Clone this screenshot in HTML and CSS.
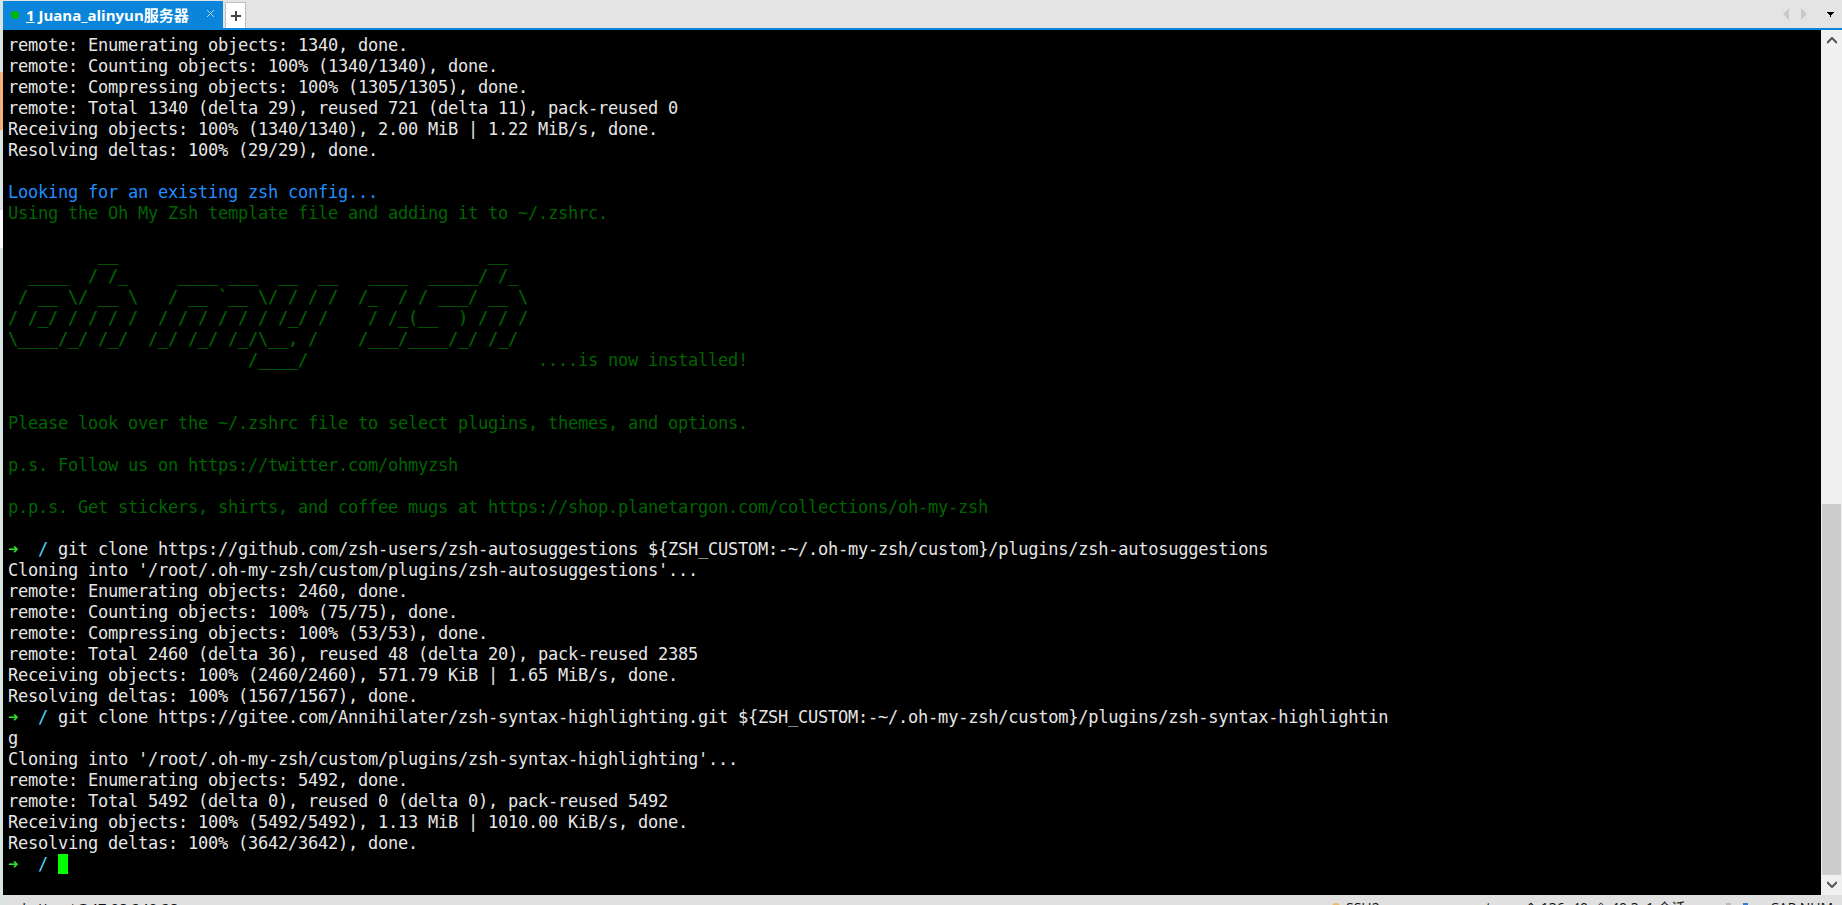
FILE: index.html
```html
<!DOCTYPE html>
<html lang="en">
<head>
<meta charset="utf-8">
<title>Juana_alinyun服务器</title>
<link rel="stylesheet" href="styles.css">
</head>
<body>
<div class="app">
  <div class="edge"></div>
  <div class="window">
    <header class="tabbar">
      <div class="tab">
        <span class="dot"></span>
        <span class="tab-title"><u>1</u> Juana_alinyun服务器</span>
        <svg class="tab-close" width="10" height="10" viewBox="0 0 10 10"><path d="M1 1l7 7M8 1l-7 7" stroke="#b5d9f3" stroke-width="1"/></svg>
      </div>
      <div class="tab-add"><svg width="12" height="12" viewBox="0 0 12 12"><path d="M6 1v10M1 6h10" stroke="#444" stroke-width="2"/></svg></div>
      <div class="tab-nav">
        <svg width="6" height="12" viewBox="0 0 6 12"><path d="M6 0v12L0 6z" fill="#c9c9c9"/></svg>
        <svg class="nav-next" width="6" height="12" viewBox="0 0 6 12"><path d="M0 0v12l6-6z" fill="#c9c9c9"/></svg>
        <svg class="nav-menu" width="7" height="5" viewBox="0 0 7 5"><path d="M0 0h7v1h-1v1h-1v1h-1v2h-1v-2h-1v-1h-1v-1h-1z" fill="#000"/></svg>
      </div>
    </header>
    <div class="main">
<pre class="term">remote: Enumerating objects: 1340, done.
remote: Counting objects: 100% (1340/1340), done.
remote: Compressing objects: 100% (1305/1305), done.
remote: Total 1340 (delta 29), reused 721 (delta 11), pack-reused 0
Receiving objects: 100% (1340/1340), 2.00 MiB | 1.22 MiB/s, done.
Resolving deltas: 100% (29/29), done.

<span class="blue">Looking for an existing zsh config...</span>
<span class="green">Using the Oh My Zsh template file and adding it to ~/.zshrc.</span>

<span class="green art">         __                                     __
  ____  / /_     ____ ___  __  __   ____  _____/ /_
 / __ \/ __ \   / __ `__ \/ / / /  /_  / / ___/ __ \
/ /_/ / / / /  / / / / / / /_/ /    / /_(__  ) / / /
\____/_/ /_/  /_/ /_/ /_/\__, /    /___/____/_/ /_/
                        /____/                       </span><span class="green">....is now installed!


Please look over the ~/.zshrc file to select plugins, themes, and options.

p.s. Follow us on https://twitter.com/ohmyzsh

p.p.s. Get stickers, shirts, and coffee mugs at https://shop.planetargon.com/collections/oh-my-zsh</span>

<span class="arrow">➜</span>  <span class="cyan">/</span> git clone https://github.com/zsh-users/zsh-autosuggestions ${ZSH_CUSTOM:-~/.oh-my-zsh/custom}/plugins/zsh-autosuggestions
Cloning into '/root/.oh-my-zsh/custom/plugins/zsh-autosuggestions'...
remote: Enumerating objects: 2460, done.
remote: Counting objects: 100% (75/75), done.
remote: Compressing objects: 100% (53/53), done.
remote: Total 2460 (delta 36), reused 48 (delta 20), pack-reused 2385
Receiving objects: 100% (2460/2460), 571.79 KiB | 1.65 MiB/s, done.
Resolving deltas: 100% (1567/1567), done.
<span class="arrow">➜</span>  <span class="cyan">/</span> git clone https://gitee.com/Annihilater/zsh-syntax-highlighting.git ${ZSH_CUSTOM:-~/.oh-my-zsh/custom}/plugins/zsh-syntax-highlightin
g
Cloning into '/root/.oh-my-zsh/custom/plugins/zsh-syntax-highlighting'...
remote: Enumerating objects: 5492, done.
remote: Total 5492 (delta 0), reused 0 (delta 0), pack-reused 5492
Receiving objects: 100% (5492/5492), 1.13 MiB | 1010.00 KiB/s, done.
Resolving deltas: 100% (3642/3642), done.
<span class="arrow">➜</span>  <span class="cyan">/</span> <span class="cursor"> </span></pre>
      <aside class="scrollbar">
        <svg class="sb-arrow-up" width="10" height="7" viewBox="0 0 10 7"><path d="M0 6L5 1l5 5" fill="none" stroke="#555" stroke-width="2"/></svg>
        <div class="sb-track"><div class="sb-thumb"></div></div>
        <svg class="sb-arrow-down" width="10" height="7" viewBox="0 0 10 7"><path d="M0 1l5 5 5-5" fill="none" stroke="#555" stroke-width="2"/></svg>
      </aside>
    </div>
    <footer class="status">
      <span class="st-left">ssh://root@47.98.240.28</span>
      <span class="st-right">
        <span class="st-ssh"><span class="folder"></span>SSH2</span>
        <span class="st-size">xterm  ⇕ 136x40  ⇳ 40,3  1 会话</span>
        <span class="st-up"></span>
        <span class="st-blue"></span>
        <span class="st-caps">CAP NUM</span>
      </span>
    </footer>
  </div>
</div>
</body>
</html>
```
FILE: styles.css
```css
html, body {
  margin: 0;
  padding: 0;
  height: 100%;
  overflow: hidden;
  background: #e0e0e0;
}
.app {
  display: flex;
  width: 1842px;
  height: 905px;
  overflow: hidden;
}
.edge {
  width: 3px;
  flex: none;
  background: linear-gradient(#d8e4e0 0 72px, #f6b07a 72px 130px, #d8e4e0 130px 210px, #fafafa 210px 248px, #d8e4e0 248px);
}
.window {
  flex: 1;
  min-width: 0;
  display: flex;
  flex-direction: column;
  background: #e0e0e0;
}
.tabbar {
  flex: none;
  height: 30px;
  display: flex;
  box-sizing: border-box;
  border-bottom: 2px solid #0a85d9;
  background: #e4e4e4;
}
.tab {
  width: 220px;
  height: 27px;
  margin-top: 1px;
  display: flex;
  align-items: center;
  background: #0a85d9;
  color: #fff;
  font: bold 15px "Open Sans", "Noto Sans CJK SC", sans-serif;
}
.dot {
  width: 8px;
  height: 8px;
  margin-left: 8px;
  border-radius: 50%;
  background: #00b800;
}
.tab-title {
  margin-left: 7px;
  white-space: nowrap;
}
.tab-close {
  margin-left: 17px;
  margin-top: -2px;
}
.tab-add {
  width: 21px;
  height: 26px;
  margin: 2px 0 0 2px;
  box-sizing: border-box;
  display: flex;
  align-items: center;
  justify-content: center;
  background: #fff;
  border: 1px solid #c0c0c0;
  border-bottom: 0;
}
.tab-nav {
  margin-left: auto;
  display: flex;
  align-items: center;
  padding-right: 8px;
  height: 28px;
}
.nav-next { margin-left: 12px; }
.nav-menu { margin-left: 20px; }
.main {
  flex: none;
  height: 865px;
  display: flex;
  background: #000;
}
.term {
  flex: 1;
  min-width: 0;
  margin: 0;
  padding: 5px 0 0 5px;
  overflow: hidden;
  color: #e6e6e6;
  font: 17px/21px "DejaVu Sans Mono", monospace;
  letter-spacing: -0.234px;
  background: #000;
}
.blue { color: #1e90ff; }
.green { color: #006400; }
.art { -webkit-text-stroke: 0.2px #006400; }
.arrow { color: #2fe02f; font-weight: bold; }
.cyan { color: #4fd8ff; }
.cursor {
  display: inline-block;
  width: 10px;
  height: 20px;
  vertical-align: top;
  background: #00ff00;
}
.scrollbar {
  flex: none;
  width: 21px;
  display: flex;
  flex-direction: column;
  align-items: center;
  background: #f0f0f0;
}
.sb-arrow-up { flex: none; margin: 7px 0 0; }
.sb-track {
  flex: 1;
  width: 100%;
  display: flex;
  flex-direction: column;
  justify-content: flex-end;
}
.sb-thumb {
  height: 371px;
  margin: 0 1px;
  background: #cdcdcd;
}
.sb-arrow-down { flex: none; margin: 6px 0 7px; }
.status {
  flex: none;
  height: 10px;
  padding: 5px 0 0 5px;
  box-sizing: border-box;
  display: flex;
  justify-content: space-between;
  color: #111;
  font: 14px/16px "Open Sans", "Noto Sans CJK SC", sans-serif;
  white-space: pre;
  overflow: hidden;
  background: #e0e0e0;
}
.st-left { font-size: 15px; }
.st-right {
  display: flex;
  align-items: flex-start;
}
.st-ssh {
  display: flex;
  width: 147px;
}
.folder {
  width: 8px;
  height: 8px;
  margin: 3px 6px 0 0;
  border-radius: 4px 4px 0 0;
  background: #eab96d;
}
.st-size { width: 247px; }
.st-up {
  width: 5px;
  height: 5px;
  margin: 3px 12px 0 0;
  background: #bbb;
}
.st-blue {
  width: 5px;
  height: 5px;
  margin: 3px 22px 0 0;
  background: #3a7bd5;
}
.st-caps { width: 72px; }
```
